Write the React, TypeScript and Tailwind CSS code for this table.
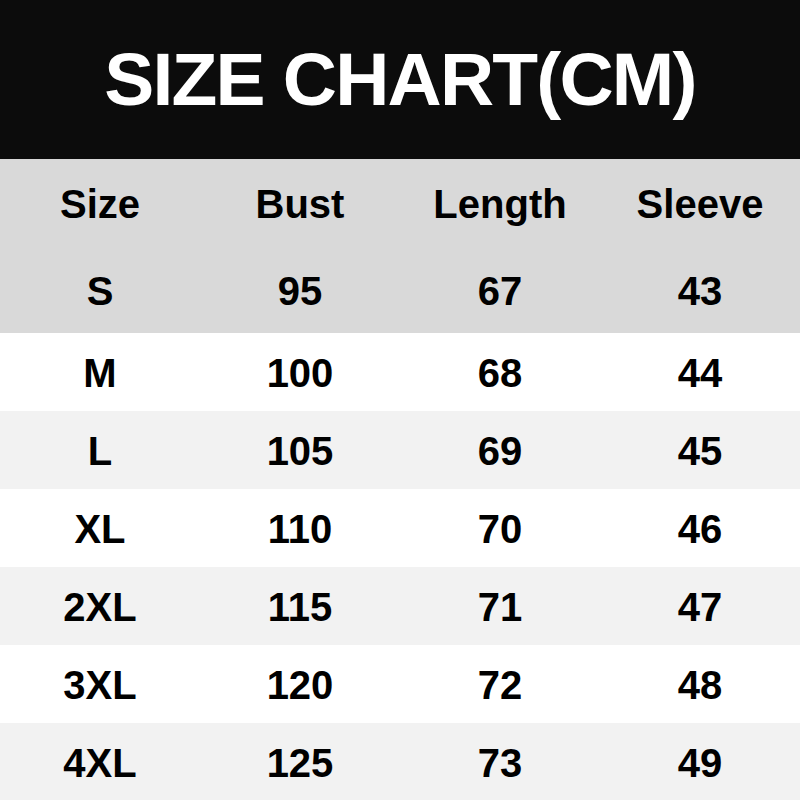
const headers = ["Size", "Bust", "Length", "Sleeve"];

const rows: string[][] = [
  ["S", "95", "67", "43"],
  ["M", "100", "68", "44"],
  ["L", "105", "69", "45"],
  ["XL", "110", "70", "46"],
  ["2XL", "115", "71", "47"],
  ["3XL", "120", "72", "48"],
  ["4XL", "125", "73", "49"],
];

const Row = ({ cells, className }: { cells: string[]; className: string }) => (
  <div className={`grid grid-cols-4 items-center pt-[2px] ${className}`}>
    {cells.map((c, i) => (
      <div key={i} className="text-center text-[40px] font-bold text-black leading-none">
        {c}
      </div>
    ))}
  </div>
);

export default function App() {
  return (
    <div
      className="w-[800px] h-[800px] flex flex-col bg-white overflow-hidden"
      style={{ fontFamily: '"Liberation Sans", Arial, sans-serif' }}
    >
      {/* Title */}
      <div className="h-[159px] shrink-0 bg-[#0c0c0c] flex items-center justify-center">
        <h1 className="text-white font-bold text-[75px] leading-none tracking-[-1.8px]">
          SIZE CHART(CM)
        </h1>
      </div>

      {/* Header + first row share the darker gray */}
      <div className="bg-[#d9d9d9] flex flex-col shrink-0">
        <Row cells={headers} className="h-[87px]" />
        <Row cells={rows[0]} className="h-[87px]" />
      </div>

      {rows.slice(1).map((r, i) => (
        <Row
          key={r[0]}
          cells={r}
          className={`h-[78px] shrink-0 ${i % 2 === 0 ? "bg-white" : "bg-[#f2f2f2]"}`}
        />
      ))}
    </div>
  );
}
